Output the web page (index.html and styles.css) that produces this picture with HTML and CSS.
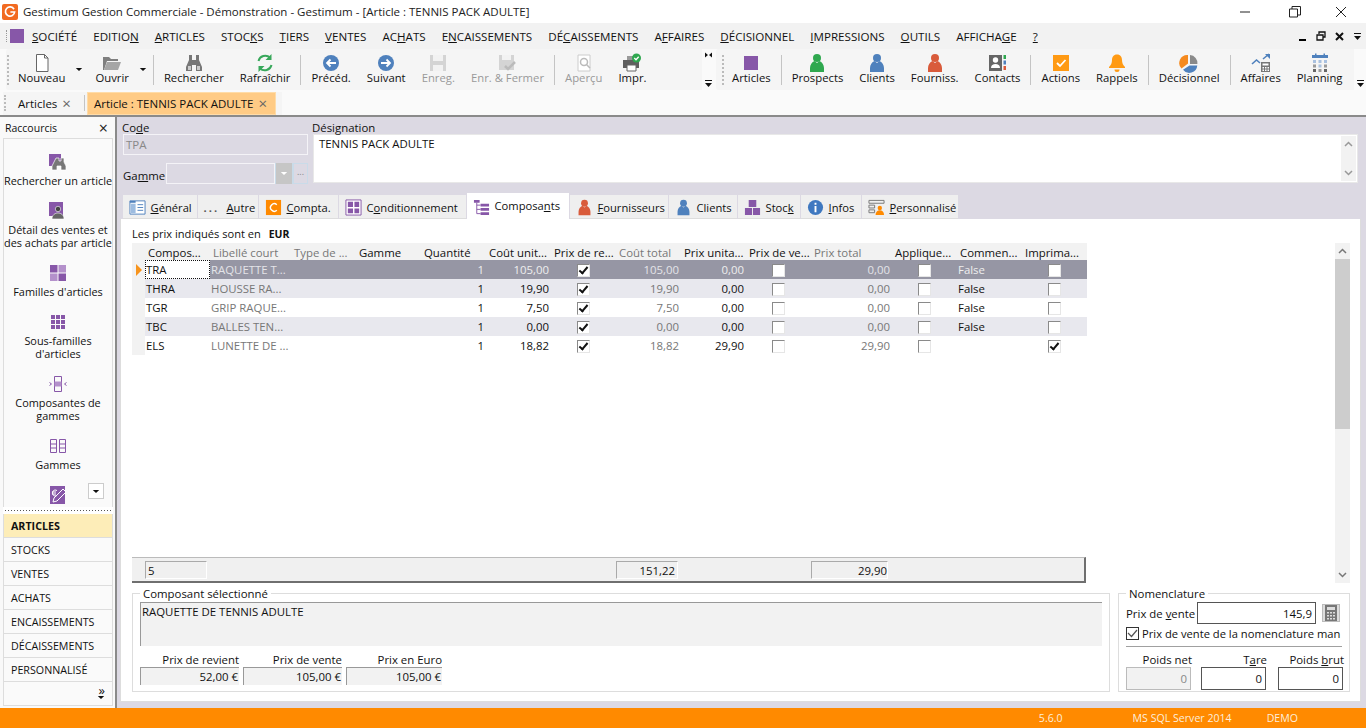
FILE: index.html

```html
<!DOCTYPE html>
<html lang="fr">
<head>
  <meta charset="UTF-8" />
  <title>Gestimum Gestion Commerciale</title>
  <link rel="stylesheet" href="styles.css">
</head>
<body>
  <svg class="defs" width="0" height="0">
    <symbol id="person" viewBox="0 0 20 20"><circle cx="10" cy="5" r="4"/><path d="M3 19v-4c0-3 2-6 4.500-7l2.500 2 2.500-2c2.500 1 4.500 4 4.500 7v4z"/></symbol>
    <symbol id="square" viewBox="0 0 20 20"><rect x="3" y="3" width="14" height="14"/></symbol>
    <symbol id="back" viewBox="0 0 20 20"><circle cx="10" cy="10" r="8" fill="#4f81bd"/><path d="M15 10H6M9.500 6.500 6 10l3.500 3.500" fill="none" stroke="#fff" stroke-width="1.800"/></symbol>
    <symbol id="next" viewBox="0 0 20 20"><circle cx="10" cy="10" r="8" fill="#4f81bd"/><path d="M5 10h9M10.500 6.500 14 10l-3.500 3.500" fill="none" stroke="#fff" stroke-width="1.800"/></symbol>
    <symbol id="drop" viewBox="0 0 10 6"><path d="M1 1h8L5 5z"/></symbol>
    <symbol id="more" viewBox="0 0 9 9"><path d="M1 1h7v1H1zM1 4h7L4.500 8z"/></symbol>
    <symbol id="overflow" viewBox="0 0 9 6"><path d="M1 .5 4 3 1 5.500zM8 .5 5 3l3 2.500z"/></symbol>
  </svg>

  <div class="app">
    <div class="titlebar">
      <svg class="logo" width="16" height="16" viewBox="0 0 16 16"><rect width="16" height="16" rx="2" fill="#f26a21"/><path d="M12 5.200A4.600 4.600 0 1 0 12.600 8H8.400" fill="none" stroke="#fff" stroke-width="1.700"/></svg>
      <span class="title-text">Gestimum Gestion Commerciale - Démonstration - Gestimum - [Article : TENNIS PACK ADULTE]</span>
      <div class="win-btns">
        <svg width="12" height="12" viewBox="0 0 12 12"><path d="M1 6h10" stroke="#222"/></svg>
        <svg width="12" height="12" viewBox="0 0 12 12"><path d="M.5 3h8v8h-8zM3 3V.5h8.500V9H8.500" fill="none" stroke="#222"/></svg>
        <svg width="12" height="12" viewBox="0 0 12 12"><path d="M1 1l10 10M11 1 1 11" stroke="#222"/></svg>
      </div>
    </div>

    <div class="menubar">
      <span class="menu-grip"></span>
      <span class="menu-square"></span>
      <nav class="menu">
        <span><u>S</u>OCIÉTÉ</span>
        <span>EDITIO<u>N</u></span>
        <span><u>A</u>RTICLES</span>
        <span>STOC<u>K</u>S</span>
        <span><u>T</u>IERS</span>
        <span><u>V</u>ENTES</span>
        <span>AC<u>H</u>ATS</span>
        <span>E<u>N</u>CAISSEMENTS</span>
        <span>DÉ<u>C</u>AISSEMENTS</span>
        <span>A<u>F</u>FAIRES</span>
        <span><u>D</u>ÉCISIONNEL</span>
        <span><u>I</u>MPRESSIONS</span>
        <span><u>O</u>UTILS</span>
        <span>AFFICHA<u>G</u>E</span>
        <span><u>?</u></span>
      </nav>
      <div class="mdi-btns">
        <svg width="9" height="9" viewBox="0 0 9 9"><path d="M1 7h7v2H1z"/></svg>
        <svg width="10" height="10" viewBox="0 0 10 10"><path d="M1 4h6v5H1zM3 3V1h6v5H7.500" fill="none" stroke="#111" stroke-width="1.300"/></svg>
        <svg width="9" height="9" viewBox="0 0 9 9"><path d="M1 1l7 7M8 1 1 8" stroke="#111" stroke-width="2"/></svg>
        <svg class="fill-dark" width="9" height="9"><use href="#more"/></svg>
      </div>
    </div>

    <div class="toolbars">
      <div class="toolbar tb-left">
        <span class="grip"></span>
        <button class="tool tool-first">
          <svg viewBox="0 0 20 20"><path d="M4.500 1.500h8l3.500 3.500v13.500H4.500z" fill="#fff" stroke="#666"/><path d="M12.500 1.500V5H16" fill="none" stroke="#666"/></svg>
          <span>Nouveau</span>
        </button>
        <svg class="caret" width="8" height="5"><use href="#drop"/></svg>
        <button class="tool tool-open">
          <svg viewBox="0 0 20 20"><path d="M1 4h6l2 2h7v2H5l-3 9H1z" fill="#7f7f7f"/><path d="M5 9h14l-3 8H2z" fill="#a6a6a6"/></svg>
          <span>Ouvrir</span>
        </button>
        <svg class="caret" width="8" height="5"><use href="#drop"/></svg>
        <span class="sep"></span>
        <button class="tool">
          <svg viewBox="0 0 20 20"><path d="M5 2h3v5h4V2h3v5l3 7v4h-6v-6H8v6H2v-4l3-7z" fill="#777"/><path d="M4 13h3v4H4zM13 13h3v4h-3z" fill="#ccc"/></svg>
          <span>Rechercher</span>
        </button>
        <button class="tool">
          <svg viewBox="0 0 20 20"><path d="M3.500 8A7 7 0 0 1 15 4.500M16.500 12A7 7 0 0 1 5 15.500" fill="none" stroke="#38a85b" stroke-width="2"/><path d="M16.500 1v6h-6zM3.500 19v-6h6z" fill="#38a85b"/></svg>
          <span>Rafraîchir</span>
        </button>
        <span class="sep"></span>
        <button class="tool"><svg><use href="#back"/></svg><span>Précéd.</span></button>
        <button class="tool"><svg><use href="#next"/></svg><span>Suivant</span></button>
        <button class="tool tool-off">
          <svg viewBox="0 0 20 20"><path d="M2 2h16v16H2z" fill="#d4d4d4"/><path d="M5 2h10v6H5z" fill="#f2f2f2"/><path d="M5 12h10v6H5z" fill="#f2f2f2"/></svg>
          <span>Enreg.</span>
        </button>
        <button class="tool tool-off">
          <svg viewBox="0 0 20 20"><path d="M2 2h15v15H2z" fill="#d4d4d4"/><path d="M5 2h9v5H5z" fill="#f2f2f2"/><path d="M8 13l3 3 7-7" fill="none" stroke="#bbb" stroke-width="2.500"/></svg>
          <span>Enr. &amp; Fermer</span>
        </button>
        <span class="sep"></span>
        <button class="tool tool-off">
          <svg viewBox="0 0 20 20"><path d="M4 2h12v16H4z" fill="#fff" stroke="#ccc"/><circle cx="10" cy="9" r="3.500" fill="none" stroke="#bbb" stroke-width="1.500"/><path d="M12.500 11.500 16 15" stroke="#bbb" stroke-width="1.500"/></svg>
          <span>Aperçu</span>
        </button>
        <button class="tool">
          <svg viewBox="0 0 20 20"><path d="M5 3h9v4H5z" fill="#999"/><path d="M1 7h16v8H1z" fill="#5f5f5f"/><path d="M5 12h9v6H5z" fill="#fff" stroke="#666"/><circle cx="14.500" cy="5" r="4.500" fill="#2fa84f"/><path d="M12.300 5l1.700 1.700 2.700-3" fill="none" stroke="#fff" stroke-width="1.300"/></svg>
          <span>Impr.</span>
        </button>
        <div class="tb-more">
          <svg class="fill-dark" width="9" height="6"><use href="#overflow"/></svg>
          <svg class="fill-dark" width="9" height="9"><use href="#more"/></svg>
        </div>
      </div>

      <div class="toolbar tb-right">
        <span class="grip"></span>
        <button class="tool"><svg class="c-purple"><use href="#square"/></svg><span>Articles</span></button>
        <span class="sep"></span>
        <button class="tool"><svg class="c-green"><use href="#person"/></svg><span>Prospects</span></button>
        <button class="tool"><svg class="c-blue"><use href="#person"/></svg><span>Clients</span></button>
        <button class="tool"><svg class="c-red"><use href="#person"/></svg><span>Fourniss.</span></button>
        <button class="tool">
          <svg viewBox="0 0 20 20"><path d="M1 2h13v16H1z" fill="#666"/><circle cx="7.500" cy="7" r="2.700" fill="#fff"/><path d="M3 15c0-3 2-4 4.500-4s4.500 1 4.500 4z" fill="#fff"/><path d="M15.500 2H18v4h-2.500z" fill="#2fa84f"/><path d="M15.500 7.500H18v4h-2.500z" fill="#4f81bd"/><path d="M15.500 13H18v4h-2.500z" fill="#d95b3b"/></svg>
          <span>Contacts</span>
        </button>
        <span class="sep"></span>
        <button class="tool">
          <svg viewBox="0 0 20 20"><rect x="2" y="2" width="16" height="16" fill="#ff9a14"/><path d="M6 10l3 3 5.500-6" fill="none" stroke="#fff" stroke-width="1.800"/></svg>
          <span>Actions</span>
        </button>
        <button class="tool">
          <svg viewBox="0 0 20 20"><path d="M10 1.500c3.500 0 5 2.500 5 5.500 0 3 1 5 3 7v1H2v-1c2-2 3-4 3-7 0-3 1.500-5.500 5-5.500z" fill="#ff9a14"/><path d="M7.500 16.500h5a2.500 2.500 0 0 1-5 0z" fill="#ff9a14"/></svg>
          <span>Rappels</span>
        </button>
        <span class="sep"></span>
        <button class="tool">
          <svg viewBox="0 0 20 20"><path d="M9 2v8.500l-6.500 5A8 8 0 0 1 9 2z" fill="#f58a1f"/><path d="M11 2a8 8 0 0 1 7.400 9H11z" fill="#8a8a8a"/><path d="M18.300 12.500A8 8 0 0 1 4 16.700l6.500-4.200z" fill="#4f81bd"/></svg>
          <span>Décisionnel</span>
        </button>
        <span class="sep"></span>
        <button class="tool">
          <svg viewBox="0 0 20 20"><path d="M1 11l4.500-4 3.500 3M12 6l6-5" fill="none" stroke="#4f81bd" stroke-width="1.600"/><path d="M14 1h5v5z" fill="#4f81bd"/><path d="M10 9h9v10h-9z" fill="#777"/><path d="M11.500 10.500h6v2h-6zM11.500 14h1.500v1.500h-1.500zM14 14h1.500v1.500H14zM16.500 14H18v1.500h-1.500zM11.500 16.500h1.500V18h-1.500zM14 16.500h1.500V18H14zM16.500 16.500H18V18h-1.500z" fill="#fff"/></svg>
          <span>Affaires</span>
        </button>
        <button class="tool">
          <svg viewBox="0 0 20 20"><path d="M2 2h16v3H2z" fill="#4f81bd"/><path d="M5 .5h1.500V3H5zM13.500 .5H15V3h-1.500z" fill="#4f81bd"/><path d="M3 7h3v3H3zM8.500 7h3v3h-3zM14 7h3v3h-3zM8.500 11.500h3v3h-3z" fill="#a9c1e0"/><path d="M3 11.500h3v3H3zM14 11.500h3v3h-3zM8.500 16h3v3h-3z" fill="#9a9a9a"/><path d="M3 16h3v3H3zM14 16h3v3h-3z" fill="#666"/></svg>
          <span>Planning</span>
        </button>
        <div class="tb-more tb-more-end">
          <svg class="fill-dark" width="9" height="9"><use href="#more"/></svg>
        </div>
      </div>
    </div>

    <div class="docbar">
      <div class="doctabs">
        <span class="grip grip-small"></span>
        <span class="doctab">Articles <b class="x">×</b></span>
        <span class="doc-sep"></span>
        <span class="doctab doctab-on">Article : TENNIS PACK ADULTE <b class="x">×</b></span>
      </div>
    </div>

    <div class="main">
      <aside class="sidebar">
        <div class="side-head"><span>Raccourcis</span><span class="side-close">×</span></div>
        <div class="shortcuts">
          <div class="shortcut">
            <svg viewBox="0 0 20 20"><path d="M1 2h12v12H1z" fill="#8757a8"/><path d="M8 6h3v3h2V6h3v4l2 4v4h-5v-4h-4v4H4v-4l2-4z" fill="#777" stroke="#fff" stroke-width=".7"/></svg>
            <span>Rechercher un article</span>
          </div>
          <div class="shortcut">
            <svg viewBox="0 0 20 20"><path d="M1 1h14v14H1z" fill="#8757a8"/><circle cx="10" cy="8" r="2.700" fill="#444" stroke="#fff" stroke-width=".6"/><path d="M4 18c0-4 3-6 6-6s6 2 6 6z" fill="#666" stroke="#fff" stroke-width=".6"/></svg>
            <span>Détail des ventes et des achats par article</span>
          </div>
          <div class="shortcut">
            <svg viewBox="0 0 20 20"><path d="M2 2h7.500v7.500H2zM10.500 10.500H18V18h-7.500z" fill="#8757a8"/><path d="M10.500 2H18v7.500h-7.500zM2 10.500h7.500V18H2z" fill="#b491cb"/></svg>
            <span>Familles d'articles</span>
          </div>
          <div class="shortcut">
            <svg viewBox="0 0 20 20"><path d="M3 3h4v4H3zM8 3h4v4H8zM13 3h4v4h-4zM3 8h4v4H3zM8 8h4v4H8zM13 8h4v4h-4zM3 13h4v4H3zM8 13h4v4H8zM13 13h4v4h-4z" fill="#8757a8"/></svg>
            <span>Sous-familles d'articles</span>
          </div>
          <div class="shortcut">
            <svg viewBox="0 0 20 20"><path d="M6.500 4V2.500h7V4M6.500 16v1.500h7V16M6.500 4v12M13.500 4v12" fill="none" stroke="#8757a8"/><path d="M6.500 7.500h7v5h-7z" fill="#b491cb"/><path d="M1.500 8.500 3.500 10l-2 1.500M18.500 8.500 16.500 10l2 1.500" fill="none" stroke="#8757a8"/></svg>
            <span>Composantes de gammes</span>
          </div>
          <div class="shortcut">
            <svg viewBox="0 0 20 20"><path d="M2.500 3.500h6v13h-6zM11.500 3.500h6v13h-6zM2.500 8h6M2.500 12h6M11.500 8h6M11.500 12h6" fill="none" stroke="#8757a8"/></svg>
            <span>Gammes</span>
          </div>
          <div class="shortcut shortcut-last">
            <svg viewBox="0 0 20 20"><path d="M2 1h15v18H2z" fill="#8757a8"/><path d="M9 5.500a3 3 0 1 0 0 5M4 7h4M4 9h4M15 4l3 3-9 9-4 1 1-4z" fill="none" stroke="#fff"/></svg>
            <button class="side-drop"><svg class="fill-dark" width="8" height="5"><use href="#drop"/></svg></button>
          </div>
        </div>
        <div class="side-dots"></div>
        <div class="sections">
          <div class="section section-on">ARTICLES</div>
          <div class="section">STOCKS</div>
          <div class="section">VENTES</div>
          <div class="section">ACHATS</div>
          <div class="section">ENCAISSEMENTS</div>
          <div class="section">DÉCAISSEMENTS</div>
          <div class="section">PERSONNALISÉ</div>
          <div class="section-more">
            <span class="chev">»</span>
            <svg class="fill-dark" width="8" height="5"><use href="#drop"/></svg>
          </div>
        </div>
      </aside>

      <section class="content">
        <div class="form-head">
          <div class="form-left">
            <label class="code-label">Co<u>d</u>e</label>
            <div class="input-ro">TPA</div>
            <div class="gamme-row">
              <label>Ga<u>m</u>me</label>
              <div class="combo">
                <span class="combo-field"></span>
                <span class="combo-btn"><svg class="fill-white" width="8" height="5"><use href="#drop"/></svg></span>
                <span class="combo-btn combo-dots">...</span>
              </div>
            </div>
          </div>
          <div class="form-right">
            <label class="code-label">Désignation</label>
            <div class="designation">
              <span>TENNIS PACK ADULTE</span>
              <div class="desig-scroll">
                <svg width="9" height="6" viewBox="0 0 9 6"><path d="M1 5l3.500-3.500L8 5" fill="none" stroke="#999" stroke-width="1.500"/></svg>
                <svg width="9" height="6" viewBox="0 0 9 6"><path d="M1 1l3.500 3.500L8 1" fill="none" stroke="#999" stroke-width="1.500"/></svg>
              </div>
            </div>
          </div>
        </div>

        <div class="tabs">
          <div class="tab tab-general">
            <svg viewBox="0 0 18 18"><path d="M1 2h16v14H1z" fill="#fff" stroke="#4f81bd"/><path d="M1 2h6v2H1z" fill="#4f81bd"/><path d="M2 5h5v10H2z" fill="#9dbce0"/><path d="M9 6h6M9 9h6M9 12h6" stroke="#4f81bd"/></svg>
            <span><u>G</u>énéral</span>
          </div>
          <div class="tab tab-autre"><span class="dots">...</span><span><u>A</u>utre</span></div>
          <div class="tab tab-compta">
            <svg viewBox="0 0 18 18"><rect x="1" y="1" width="16" height="16" fill="#ff8a00"/><path d="M12.500 6A4 4 0 1 0 12.500 12" fill="none" stroke="#fff" stroke-width="1.500"/></svg>
            <span><u>C</u>ompta.</span>
          </div>
          <div class="tab tab-cond">
            <svg viewBox="0 0 18 18"><path d="M1 1h16v16H1z" fill="#fff" stroke="#8757a8"/><path d="M3 3h5.500v5.500H3zM10 3h5v5.500h-5zM3 10h5.500v5H3zM10 10h5v5h-5z" fill="#8757a8"/></svg>
            <span>C<u>o</u>nditionnement</span>
          </div>
          <div class="tab tab-on">
            <svg viewBox="0 0 18 18"><path d="M1 1h6v3H1zM8 5h9v3H8zM8 9.500h9v3H8zM8 14h9v3H8z" fill="#8757a8"/><path d="M4 4v11.500h4M4 6.500h4M4 11h4" fill="none" stroke="#8757a8"/></svg>
            <span>Composa<u>n</u>ts</span>
          </div>
          <div class="tab tab-four">
            <svg class="c-red"><use href="#person"/></svg>
            <span><u>F</u>ournisseurs</span>
          </div>
          <div class="tab tab-clients">
            <svg class="c-blue"><use href="#person"/></svg>
            <span>Clients</span>
          </div>
          <div class="tab tab-stock">
            <svg viewBox="0 0 18 18"><path d="M5 1h8v7.500H5zM1 9.500h7.500V17H1zM9.500 9.500H17V17H9.500z" fill="#8757a8"/></svg>
            <span>Stoc<u>k</u></span>
          </div>
          <div class="tab tab-infos">
            <svg viewBox="0 0 18 18"><circle cx="9" cy="9" r="8" fill="#3f78c0"/><path d="M8 4h2v2H8zM8 7.500h2V14H8z" fill="#fff"/></svg>
            <span><u>I</u>nfos</span>
          </div>
          <div class="tab tab-perso">
            <svg viewBox="0 0 18 18"><path d="M1 1.500h16v3H1zM1 6.500h6v3H1zM1 11.500h6v3H1z" fill="none" stroke="#777"/><circle cx="12.500" cy="9.500" r="2.300" fill="#ff8a00"/><path d="M8 17c0-3 2-5 4.500-5s4.500 2 4.500 5z" fill="#ff8a00"/></svg>
            <span><u>P</u>ersonnalisé</span>
          </div>
        </div>

        <div class="panel">
          <div class="currency">Les prix indiqués sont en <b>EUR</b></div>
          <div class="grid-row">
            <div class="grid-box">
              <table class="grid">
                <colgroup>
                  <col class="w-head"><col class="w-65"><col class="w-81"><col class="w-65"><col class="w-65"><col class="w-65"><col class="w-65"><col class="w-65"><col class="w-65"><col class="w-65"><col class="w-65"><col class="w-81"><col class="w-65"><col class="w-65"><col class="w-65">
                </colgroup>
                <thead>
                  <tr>
                    <th class="rowhead"></th>
                    <th>Compos...</th><th class="muted">Libellé court</th><th class="muted">Type de ...</th><th>Gamme</th><th>Quantité</th><th>Coût unit...</th><th>Prix de re...</th><th class="muted">Coût total</th><th>Prix unita...</th><th>Prix de ve...</th><th class="muted">Prix total</th><th>Applique...</th><th>Commen...</th><th>Imprima...</th>
                  </tr>
                </thead>
                <tbody>
                  <tr class="selected">
                    <td class="rowhead"><span class="pointer"></span></td>
                    <td class="current">TRA</td><td class="muted">RAQUETTE T...</td><td></td><td></td><td class="num">1</td><td class="num">105,00</td><td class="box"><span class="check on"></span></td><td class="num muted">105,00</td><td class="num">0,00</td><td class="box"><span class="check"></span></td><td class="num muted">0,00</td><td class="box"><span class="check"></span></td><td>False</td><td class="box"><span class="check"></span></td>
                  </tr>
                  <tr class="alt">
                    <td class="rowhead"></td>
                    <td>THRA</td><td class="muted">HOUSSE RA...</td><td></td><td></td><td class="num">1</td><td class="num">19,90</td><td class="box"><span class="check on"></span></td><td class="num muted">19,90</td><td class="num">0,00</td><td class="box"><span class="check"></span></td><td class="num muted">0,00</td><td class="box"><span class="check"></span></td><td>False</td><td class="box"><span class="check"></span></td>
                  </tr>
                  <tr>
                    <td class="rowhead"></td>
                    <td>TGR</td><td class="muted">GRIP RAQUE...</td><td></td><td></td><td class="num">1</td><td class="num">7,50</td><td class="box"><span class="check on"></span></td><td class="num muted">7,50</td><td class="num">0,00</td><td class="box"><span class="check"></span></td><td class="num muted">0,00</td><td class="box"><span class="check"></span></td><td>False</td><td class="box"><span class="check"></span></td>
                  </tr>
                  <tr class="alt">
                    <td class="rowhead"></td>
                    <td>TBC</td><td class="muted">BALLES TEN...</td><td></td><td></td><td class="num">1</td><td class="num">0,00</td><td class="box"><span class="check on"></span></td><td class="num muted">0,00</td><td class="num">0,00</td><td class="box"><span class="check"></span></td><td class="num muted">0,00</td><td class="box"><span class="check"></span></td><td>False</td><td class="box"><span class="check"></span></td>
                  </tr>
                  <tr>
                    <td class="rowhead"></td>
                    <td>ELS</td><td class="muted">LUNETTE DE ...</td><td></td><td></td><td class="num">1</td><td class="num">18,82</td><td class="box"><span class="check on"></span></td><td class="num muted">18,82</td><td class="num">29,90</td><td class="box"><span class="check"></span></td><td class="num muted">29,90</td><td class="box"><span class="check"></span></td><td></td><td class="box"><span class="check on"></span></td>
                  </tr>
                </tbody>
              </table>
              <div class="grid-foot">
                <span class="foot-cell foot-count">5</span>
                <span class="foot-cell foot-cost">151,22</span>
                <span class="foot-cell foot-price">29,90</span>
              </div>
            </div>
            <div class="vscroll">
              <svg width="9" height="6" viewBox="0 0 9 6"><path d="M1 5l3.500-3.500L8 5" fill="none" stroke="#777" stroke-width="1.500"/></svg>
              <div class="vtrack"><div class="vthumb"></div></div>
              <svg width="9" height="6" viewBox="0 0 9 6"><path d="M1 1l3.500 3.500L8 1" fill="none" stroke="#777" stroke-width="1.500"/></svg>
            </div>
          </div>

          <div class="groups">
            <fieldset class="group group-sel">
              <legend>Composant sélectionné</legend>
              <div class="readonly-text">RAQUETTE DE TENNIS ADULTE</div>
              <div class="prices">
                <div class="price"><label>Prix de revient</label><div class="price-val">52,00 €</div></div>
                <div class="price"><label>Prix de vente</label><div class="price-val">105,00 €</div></div>
                <div class="price"><label>Prix en Euro</label><div class="price-val">105,00 €</div></div>
              </div>
            </fieldset>
            <fieldset class="group group-nom">
              <legend>Nomenclature</legend>
              <div class="nom-price">
                <label>Prix de <u>v</u>ente</label>
                <div class="field field-price">145,9</div>
                <button class="calc">
                  <svg width="14" height="16" viewBox="0 0 14 16"><path d="M1 0h12v16H1z" fill="#777"/><path d="M3 2h8v3H3z" fill="#ddd"/><path d="M3 7h2v1.500H3zM6 7h2v1.500H6zM9 7h2v1.500H9zM3 10h2v1.500H3zM6 10h2v1.500H6zM9 10h2v1.500H9zM3 13h2v1.500H3zM6 13h2v1.500H6zM9 13h2v1.500H9z" fill="#ddd"/></svg>
                </button>
              </div>
              <div class="nom-check">
                <span class="tick"><svg width="11" height="9" viewBox="0 0 11 9"><path d="M1 4l3.500 3.500L10 1" fill="none" stroke="#555" stroke-width="1.200"/></svg></span>
                <span class="nom-check-text">Prix de vente de la nomenclature man</span>
              </div>
              <div class="nom-weights">
                <div class="weight"><label>Poids net</label><div class="field field-off">0</div></div>
                <div class="weight"><label>T<u>a</u>re</label><div class="field">0</div></div>
                <div class="weight"><label>Poids <u>b</u>rut</label><div class="field">0</div></div>
              </div>
            </fieldset>
          </div>
        </div>
      </section>
    </div>

    <footer class="status">
      <span>5.6.0</span>
      <span>MS SQL Server 2014</span>
      <span>DEMO</span>
    </footer>
  </div>
</body>
</html>
```

FILE: styles.css

```css
html, body {
  margin: 0;
  padding: 0;
  height: 100%;
  overflow: hidden;
  font-family: "Open Sans", "Noto Sans", Arial, sans-serif;
  font-size: 11.4px;
  color: #111;
  background-color: #fafafa;
}
u {
  text-underline-offset: 1px;
}
label {
  display: block;
}
.defs {
  position: absolute;
}
.fill-dark { fill: #111; }
.fill-white { fill: #fff; }
.app {
  display: flex;
  flex-direction: column;
  height: 100vh;
}

/* title bar */
.titlebar {
  display: flex;
  align-items: center;
  height: 23px;
  padding-left: 2px;
  background-color: white;
  flex: none;
}
.logo {
  margin-right: 5px;
}
.title-text {
  color: #222;
  font-size: 11.5px;
}
.win-btns {
  display: flex;
  gap: 34px;
  margin-left: auto;
  margin-right: 19px;
}
.win-btns svg:first-child { margin-right: 4px; }

/* menu */
.menubar {
  display: flex;
  align-items: center;
  height: 26px;
  flex: none;
  background-color: #f2f2f2;
  padding-left: 6px;
}
.menu-grip {
  width: 1px;
  height: 12px;
  margin-right: 2px;
  border-left: 1px dotted #999;
}
.menu-square {
  width: 14px;
  height: 14px;
  background-color: #8757a8;
  margin-right: 8px;
}
.menu {
  display: flex;
  gap: 16px;
  font-size: 11.6px;
}
.mdi-btns {
  display: flex;
  align-items: center;
  gap: 9px;
  margin-left: auto;
  margin-right: 4px;
}

/* toolbars */
.toolbars {
  display: flex;
  gap: 2px;
  height: 41px;
  flex: none;
  padding-left: 6px;
}
.toolbar {
  display: flex;
  align-items: center;
  height: 41px;
  background-color: #f5f5f5;
  border-radius: 3px;
}
.tb-left { width: 708px; }
.tb-right { flex: 1; padding-left: 5px; }
.grip {
  width: 0;
  height: 30px;
  margin: 0 0 0 1px;
  border-left: 2px dotted #bbb;
  flex: none;
}
.grip-small { height: 16px; }
.tool {
  display: flex;
  flex-direction: column;
  align-items: center;
  height: 41px;
  padding: 4px 8px 0;
  border: none;
  background: none;
  font-family: inherit;
  font-size: 11.3px;
  line-height: 13px;
  color: #111;
  white-space: nowrap;
}
.tool svg {
  width: 20px;
  height: 20px;
  margin-bottom: -2px;
}
.tool-first { margin-left: 1px; }
.tool-off { color: #999; }
.caret { flex: none; margin: 0 4px 0 2px; fill: #111; }
.sep {
  width: 1px;
  height: 30px;
  margin: 0 2px;
  background-color: #c4c4c4;
  flex: none;
}
.tb-more {
  display: flex;
  flex-direction: column;
  justify-content: space-between;
  align-items: center;
  margin-left: auto;
  width: 12px;
  height: 41px;
  padding: 3px 0 2px;
  box-sizing: border-box;
  background-color: #fafafa;
}
.tb-more-end { justify-content: flex-end; }
.chev {
  font-size: 13px;
  line-height: 9px;
}
.c-purple { fill: #8757a8; }
.c-green { fill: #2fa84f; }
.c-blue { fill: #4f81bd; }
.c-red { fill: #d95b3b; }

/* open documents */
.docbar {
  height: 23px;
  margin-top: 2px;
  flex: none;
  padding-left: 3px;
}
.doctabs {
  display: flex;
  align-items: center;
  width: 279px;
  height: 23px;
  box-sizing: border-box;
  padding-bottom: 1px;
  background-color: #f5f5f5;
}
.doctab {
  display: flex;
  align-items: center;
  gap: 5px;
  height: 21px;
  margin-left: 4px;
  padding: 0 13px 0 8px;
  white-space: nowrap;
  font-size: 11.5px;
}
.doc-sep {
  width: 1px;
  height: 16px;
  margin: 0 2px 0 0;
  background-color: #c4c4c4;
}
.doctab-on {
  margin-left: 0;
  background-color: #ffcb85;
  border: 1px solid #ffdca8;
  padding: 0 8px 0 6px;
}
.x {
  font-weight: normal;
  font-size: 15px;
  line-height: 12px;
  color: #666;
}

/* left shortcuts */
.main {
  display: flex;
  flex: 1;
  min-height: 0;
  border-top: 2px solid #8a8a8a;
}
.sidebar {
  display: flex;
  flex-direction: column;
  width: 110px;
  padding: 0 2px 2px 3px;
  flex: none;
  background-color: #f9f9f9;
  border-right: 2px solid #8a8a8a;
}
.side-head {
  display: flex;
  justify-content: space-between;
  align-items: center;
  height: 21px;
  padding: 0 5px 0 2px;
  font-size: 10.5px;
}
.side-close {
  font-size: 16px;
  line-height: 12px;
  color: #222;
}
.shortcuts {
  height: 369px;
  overflow: hidden;
  border: 1px solid #ddd;
  border-bottom: none;
  box-sizing: border-box;
  padding-top: 13px;
  display: flex;
  flex-direction: column;
  align-items: center;
  gap: 14px;
  background-color: #fafafa;
}
.shortcut {
  display: flex;
  flex-direction: column;
  align-items: center;
  text-align: center;
  line-height: 13px;
  font-size: 10.9px;
  flex: none;
  width: 108px;
}
.shortcut svg {
  width: 20px;
  height: 20px;
  margin-bottom: 2px;
}
.shortcut-last {
  position: relative;
}
.side-drop {
  position: absolute;
  right: 8px;
  top: -2px;
  width: 16px;
  height: 16px;
  padding: 0;
  border: 1px solid #ccc;
  background-color: #fff;
  display: flex;
  align-items: center;
  justify-content: center;
}
.side-drop svg {
  width: 8px;
  height: 5px;
  margin: 0;
}
.side-dots {
  height: 7px;
  background-color: white;
  background-image: radial-gradient(#555 0.7px, transparent 0.8px);
  background-size: 3px 3px;
  background-repeat: repeat-x;
  background-position: 40px 2px;
}
.sections {
  flex: 1;
  display: flex;
  flex-direction: column;
  border: 1px solid #ddd;
  border-top: none;
}
.section {
  display: flex;
  align-items: center;
  height: 24px;
  box-sizing: border-box;
  padding-left: 7px;
  font-size: 10.7px;
  border-bottom: 1px solid #ddd;
  background-color: #fafafa;
}
.section-on {
  background-color: #fdedb8;
  font-weight: bold;
}
.section-more {
  flex: 1;
  display: flex;
  flex-direction: column;
  align-items: flex-end;
  padding: 4px 7px 0 0;
  background-color: #fafafa;
}

/* record form */
.content {
  flex: 1;
  min-width: 0;
  display: flex;
  flex-direction: column;
  background-color: #dcd9e3;
  padding: 0 5px 6px 3px;
}
.form-head {
  display: flex;
  height: 77px;
  flex: none;
  gap: 5px;
}
.form-left {
  width: 188px;
  box-sizing: border-box;
  padding-left: 3px;
  flex: none;
}
.form-right {
  flex: 1;
  margin-right: 3px;
}
.code-label {
  height: 17px;
  line-height: 22px;
  margin-left: -1px;
}
.input-ro {
  height: 21px;
  line-height: 20px;
  box-sizing: border-box;
  border: 1px solid #f4f3f7;
  padding-left: 2px;
  color: #888;
  font-size: 11.5px;
}
.gamme-row {
  display: flex;
  align-items: center;
  margin-top: 8px;
  height: 21px;
}
.gamme-row label {
  width: 43px;
  padding-top: 3px;
  flex: none;
}
.combo {
  display: flex;
  flex: 1;
  height: 21px;
  background-color: #c9dbe9;
}
.combo-field {
  flex: 1;
  border: 1px solid #f4f3f7;
  background-color: #dcd9e3;
}
.combo-btn {
  display: flex;
  align-items: center;
  justify-content: center;
  width: 16px;
  margin-left: 1px;
  background-color: #c6c6c6;
}
.combo-dots {
  box-sizing: border-box;
  border: 1px solid #c9dbe9;
  background-color: #dcd9e3;
  color: #888;
  width: 15px;
  font-size: 9px;
  padding-bottom: 4px;
}
.designation {
  display: flex;
  justify-content: space-between;
  height: 49px;
  box-sizing: border-box;
  padding: 1px 1px 1px 5px;
  background-color: white;
  border: 1px solid #e8e8e8;
}
.desig-scroll {
  display: flex;
  flex-direction: column;
  justify-content: space-between;
  align-items: center;
  width: 15px;
  padding: 5px 0;
  background-color: #f2f2f2;
}

/* tabs */
.tabs {
  display: flex;
  gap: 1px;
  height: 25px;
  flex: none;
  align-items: flex-end;
  padding-left: 3px;
  font-size: 11.2px;
}
.tab {
  display: flex;
  align-items: center;
  gap: 5px;
  height: 24px;
  box-sizing: border-box;
  padding: 2px 0 0 5.5px;
  background-color: #efefef;
  border-bottom: 1px solid #ddd;
  white-space: nowrap;
  flex: none;
}
.tab svg {
  width: 17px;
  height: 17px;
  flex: none;
}
.tab-on {
  height: 26px;
  width: 102px;
  background-color: white;
  border-bottom: none;
}
.tab-on span { margin-bottom: 3px; }
.tab-general { width: 74px; }
.tab-autre { width: 60px; }
.tab-compta { width: 79px; }
.tab-cond { width: 127px; }
.tab-four { width: 98px; }
.tab-clients { width: 68px; }
.tab-stock { width: 62px; }
.tab-infos { width: 60px; }
.tab-perso { width: 96px; }
.dots {
  font-weight: bold;
  letter-spacing: 2px;
  color: #555;
  margin-right: 1px;
  width: 17px;
}

/* main panel */
.panel {
  flex: 1;
  min-height: 0;
  display: flex;
  flex-direction: column;
  background-color: white;
  border: 1px solid #ddd;
  border-top: none;
  padding: 0 10px 9px 11px;
}
.currency {
  height: 24px;
  line-height: 30px;
  font-size: 11.1px;
  flex: none;
}
.currency b {
  margin-left: 5px;
  font-size: 10.5px;
}
.grid-row {
  display: flex;
  justify-content: space-between;
  flex: 1;
  min-height: 0;
}
.grid-box {
  display: flex;
  flex-direction: column;
  justify-content: space-between;
  width: 954px;
}
.grid {
  table-layout: fixed;
  border-collapse: collapse;
  width: 955px;
}
.w-head { width: 13px; }
.w-65 { width: 65px; }
.w-81 { width: 81px; }
.grid th {
  height: 17px;
  box-sizing: border-box;
  padding: 2px 0 0 3px;
  font-weight: normal;
  text-align: left;
  background-color: #f2f2f2;
  white-space: nowrap;
  overflow: hidden;
}
.grid td {
  height: 19px;
  padding: 0 2px 0 1px;
  white-space: nowrap;
  overflow: hidden;
}
.grid .muted { color: #777; }
.grid .num { text-align: right; }
.grid .box { text-align: center; padding: 0; }
.grid .rowhead {
  background-color: #f2f2f2;
  padding: 0;
}
.alt td { background-color: #e8e8ee; }
.selected td { background-color: #9696a4; color: #eee; }
.grid .selected td.muted { color: #e4e4e8; }
.grid .selected td.current {
  background-color: white;
  color: #111;
  outline: 1px dotted #111;
  outline-offset: -1px;
}
.pointer {
  display: block;
  width: 0;
  height: 0;
  margin-left: 4px;
  border-left: 6px solid #f7941d;
  border-top: 6px solid transparent;
  border-bottom: 6px solid transparent;
}
.check {
  display: inline-block;
  position: relative;
  width: 13px;
  height: 13px;
  box-sizing: border-box;
  vertical-align: middle;
  background-color: white;
  border: 1px solid;
  border-color: #8a8a8a #e6e6e6 #e6e6e6 #8a8a8a;
}
.check.on::after {
  content: "";
  position: absolute;
  left: 3px;
  top: 0;
  width: 3px;
  height: 7px;
  border: solid #111;
  border-width: 0 2px 2px 0;
  transform: rotate(40deg);
}
.grid-foot {
  display: flex;
  align-items: center;
  height: 26px;
  flex: none;
  box-sizing: border-box;
  background-color: #f0f0f0;
  border-top: 1px solid #bbb;
  border-bottom: 2px solid #6f6f6f;
  border-right: 2px solid #6f6f6f;
  padding-left: 13px;
}
.foot-cell {
  height: 18px;
  line-height: 17px;
  box-sizing: border-box;
  border: 1px solid;
  border-color: #aaa #fff #fff #aaa;
  padding: 0 2px;
  text-align: right;
}
.foot-count { width: 62px; text-align: left; }
.foot-cost { width: 62px; margin-left: 409px; }
.foot-price { width: 77px; margin-left: 133px; padding-right: 0; }
.vscroll {
  display: flex;
  flex-direction: column;
  align-items: center;
  width: 15px;
  background-color: #f2f2f2;
  padding: 5px 0;
  gap: 5px;
  box-sizing: border-box;
}
.vtrack {
  flex: 1;
  width: 100%;
}
.vthumb {
  height: 170px;
  background-color: #cdcdcd;
}

/* group boxes */
.groups {
  display: flex;
  gap: 8px;
  height: 105px;
  flex: none;
  margin-top: 4px;
}
.group {
  margin: 0;
  min-width: 0;
  box-sizing: border-box;
  border: 1px solid #ddd;
}
.group legend {
  padding: 0 3px;
  line-height: 13px;
}
.group-sel {
  width: 978px;
  padding: 2px 7px 0;
}
.group-nom {
  width: 232px;
  padding: 2px 5px 0 7px;
}
.readonly-text {
  height: 44px;
  box-sizing: border-box;
  padding: 1px 1px;
  background-color: #f2f2f2;
  border-top: 1px solid #999;
  border-left: 1px solid #999;
}
.prices {
  display: flex;
  gap: 4px;
  margin-top: 6px;
}
.price {
  width: 99px;
}
.price:last-child { width: 96px; }
.price label {
  height: 15px;
  line-height: 15px;
  text-align: right;
}
.price-val {
  height: 18px;
  line-height: 17px;
  box-sizing: border-box;
  padding-right: 1px;
  text-align: right;
  background-color: #f2f2f2;
  border-top: 1px solid #999;
  border-left: 1px solid #999;
}
.nom-price {
  display: flex;
  align-items: center;
}
.nom-price label {
  width: 71px;
  flex: none;
}
.field {
  height: 23px;
  line-height: 21px;
  box-sizing: border-box;
  border: 1px solid #555;
  padding-right: 3px;
  text-align: right;
}
.field-price { width: 119px; height: 22px; }
.field-off {
  border-color: #bbb;
  background-color: #f2f2f2;
  color: #888;
}
.calc {
  width: 18px;
  height: 18px;
  margin-left: 6px;
  padding: 0;
  display: flex;
  align-items: center;
  justify-content: center;
  background-color: #ddd;
  border: 1px solid #bbb;
}
.nom-check {
  display: flex;
  align-items: center;
  gap: 3px;
  margin-top: 3px;
  height: 13px;
}
.tick {
  display: flex;
  align-items: center;
  justify-content: center;
  width: 13px;
  height: 13px;
  box-sizing: border-box;
  border: 1px solid #333;
  flex: none;
}
.nom-check-text {
  white-space: nowrap;
  font-size: 11.2px;
}
.nom-weights {
  display: flex;
  margin-top: 6px;
  padding-top: 6px;
  border-top: 1px solid #a0a0a0;
  width: 216px;
}
.weight { width: 65px; flex: none; }
.weight:nth-child(2) { margin-left: 10px; }
.weight:nth-child(3) { margin-left: 12px; }
.weight label {
  height: 14px;
  line-height: 14px;
  text-align: right;
  margin-right: -1px;
}

/* status bar */
.status {
  display: flex;
  align-items: center;
  justify-content: flex-end;
  height: 20px;
  flex: none;
  padding-right: 68px;
  font-size: 10.6px;
  background-color: #ff8a00;
  color: #fdeedd;
}
.status span:first-child { margin-right: 70px; }
.status span:last-child { margin-left: 35px; }
```
